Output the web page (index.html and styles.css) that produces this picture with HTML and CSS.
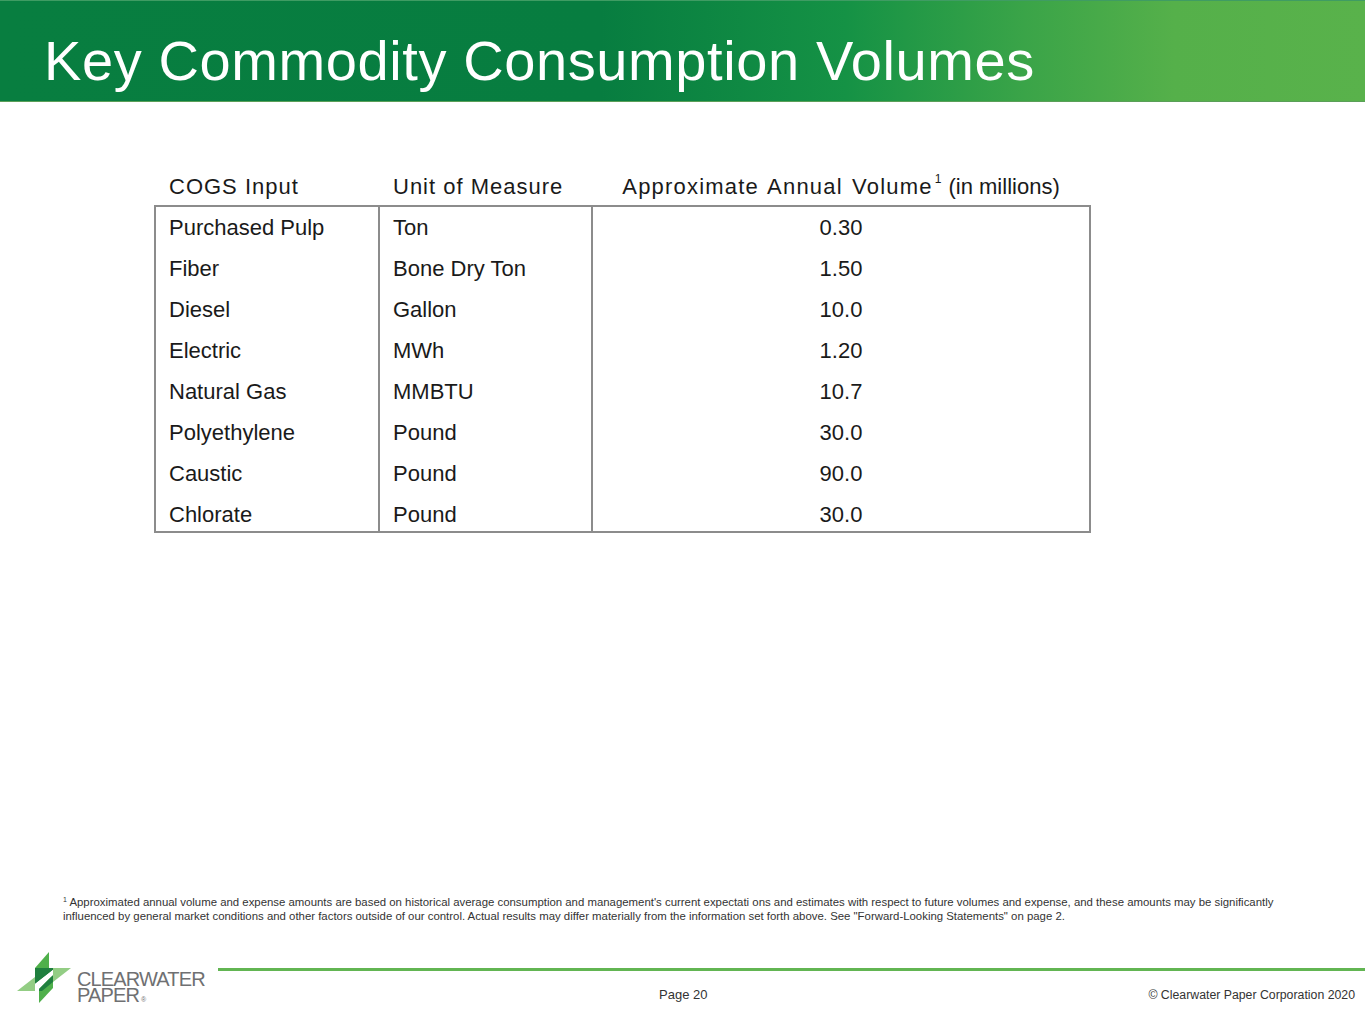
FILE: index.html
```html
<!DOCTYPE html>
<html lang="en">
<head>
<meta charset="utf-8">
<title>Key Commodity Consumption Volumes</title>
<link rel="stylesheet" href="styles.css">
</head>
<body>
<div class="page">
  <header class="banner">
    <h1 class="title">Key Commodity Consumption Volumes</h1>
  </header>

  <main class="content">
    <div class="table">
      <div class="thead">
        <div class="th">COGS Input</div>
        <div class="th">Unit of Measure</div>
        <div class="th th-center"><span class="th-wide">Approximate Annual Volume</span><sup class="sup">1</sup> <span class="th-plain">(in millions)</span></div>
      </div>
      <div class="tbody">
        <div class="col col-input">
          <div class="cell">Purchased Pulp</div>
          <div class="cell">Fiber</div>
          <div class="cell">Diesel</div>
          <div class="cell">Electric</div>
          <div class="cell">Natural Gas</div>
          <div class="cell">Polyethylene</div>
          <div class="cell">Caustic</div>
          <div class="cell">Chlorate</div>
        </div>
        <div class="col col-unit">
          <div class="cell">Ton</div>
          <div class="cell">Bone Dry Ton</div>
          <div class="cell">Gallon</div>
          <div class="cell">MWh</div>
          <div class="cell">MMBTU</div>
          <div class="cell">Pound</div>
          <div class="cell">Pound</div>
          <div class="cell">Pound</div>
        </div>
        <div class="col col-volume">
          <div class="cell">0.30</div>
          <div class="cell">1.50</div>
          <div class="cell">10.0</div>
          <div class="cell">1.20</div>
          <div class="cell">10.7</div>
          <div class="cell">30.0</div>
          <div class="cell">90.0</div>
          <div class="cell">30.0</div>
        </div>
      </div>
    </div>
  </main>

  <p class="footnote"><sup class="fn-sup">1</sup> Approximated annual volume and expense amounts are based on historical average consumption and management's current expectati ons and estimates with respect to future volumes and expense, and these amounts may be significantly<br>influenced by general market conditions and other factors outside of our control. Actual results may differ materially from the information set forth above. See "Forward-Looking Statements" on page 2.</p>

  <footer class="footer">
    <div class="logo">
      <svg class="logo-mark" width="64" height="58" viewBox="0 0 64 58" aria-hidden="true">
        <polygon points="5,43 23,29 23,43" fill="#93cd84"/>
        <polygon points="41,20 59,20 41,34" fill="#93cd84"/>
        <polygon points="23,20 37,4 37,20" fill="#4fb04b"/>
        <polygon points="23,20 41,20 41,22 23,36" fill="#1f7f3e"/>
        <polygon points="27,41 41,27 41,40 27,55" fill="#4fb04b"/>
        <polygon points="27,41 41,27 41,34 30,43 27,43" fill="#1f7f3e"/>
        <polygon points="23,36 41,22 41,27 23,41" fill="#ffffff"/>
      </svg>
      <div class="logo-text">
        <div class="logo-line">CLEARWATER</div>
        <div class="logo-line">PAPER<span class="reg">®</span></div>
      </div>
    </div>
    <div class="foot-right">
      <div class="rule"></div>
      <div class="meta">
        <span class="page-no">Page 20</span>
        <span class="copy">© Clearwater Paper Corporation 2020</span>
      </div>
    </div>
  </footer>
</div>
</body>
</html>
```
FILE: styles.css
```css
html, body {
  margin: 0;
  padding: 0;
  background: #ffffff;
}

body {
  font-family: "Liberation Sans", Arial, sans-serif;
  color: #1a1a1a;
}

.page {
  width: 1365px;
  height: 1024px;
  display: flex;
  flex-direction: column;
  overflow: hidden;
}

/* ---------- banner ---------- */
.banner {
  height: 102px;
  box-sizing: border-box;
  flex: none;
  background: linear-gradient(to right, #087e40 0%, #077d40 44%, #159245 62%, #3aa448 75%, #55b04a 86%, #59b24b 100%);
  border-top: 1px solid #3f9c63;
  border-bottom: 1px solid #5a9f58;
  padding-left: 44px;
  display: flex;
  align-items: flex-start;
}

.title {
  margin: 0;
  padding-top: 28px;
  font-weight: normal;
  font-size: 56px;
  line-height: 64px;
  letter-spacing: 0.6px;
  color: #ffffff;
}

/* ---------- table ---------- */
.content {
  padding-top: 62px;
  padding-left: 154px;
}

.table {
  width: 937px;
  font-size: 22px;
}

.thead {
  display: grid;
  grid-template-columns: 224px 213px 500px;
  height: 41px;
}

.th {
  padding: 10px 0 0 15px;
  line-height: 26px;
  letter-spacing: 1px;
  white-space: nowrap;
}

.th-center {
  padding-left: 0;
  text-align: center;
}

.th-wide {
  letter-spacing: 1.2px;
  word-spacing: 2px;
}

.th-plain {
  letter-spacing: 0;
}

.sup {
  font-size: 12px;
  line-height: 0;
  letter-spacing: 0;
  position: relative;
  top: -3px;
  margin-left: 2px;
}

.tbody {
  display: grid;
  grid-template-columns: 222px 213px 498px;
  grid-template-rows: minmax(0, 1fr);
  height: 328px;
  box-sizing: border-box;
  border: 2px solid #8c8c8c;
}

.col {
  display: flex;
  flex-direction: column;
  overflow: hidden;
}

.col-unit,
.col-volume {
  border-left: 2px solid #8c8c8c;
}

.cell {
  height: 41px;
  line-height: 41px;
  flex: none;
  white-space: nowrap;
}

.col-input .cell,
.col-unit .cell {
  padding-left: 13px;
}

.col-volume .cell {
  text-align: center;
}

/* ---------- footnote ---------- */
.footnote {
  margin: auto 0 25px 0;
  padding-left: 63px;
  font-size: 11.4px;
  line-height: 14px;
  color: #333333;
}

.fn-sup {
  font-size: 7px;
  line-height: 0;
  vertical-align: 4px;
}

/* ---------- footer ---------- */
.footer {
  height: 76px;
  flex: none;
  display: flex;
}

.logo {
  width: 218px;
  flex: none;
  display: flex;
  align-items: flex-start;
  padding-left: 12px;
  box-sizing: border-box;
}

.logo-mark {
  display: block;
  flex: none;
}

.logo-text {
  margin-top: 23px;
  margin-left: 1px;
  font-size: 20px;
  line-height: 16px;
  letter-spacing: -0.85px;
  color: #6f7072;
}

.logo-line {
  white-space: nowrap;
}

.reg {
  font-size: 7px;
  letter-spacing: 0;
  margin-left: 2px;
}

.foot-right {
  flex: 1;
  display: flex;
  flex-direction: column;
}

.rule {
  margin-top: 20px;
  height: 3px;
  background: #62b552;
}

.meta {
  margin-top: 16px;
  display: flex;
  align-items: baseline;
  padding-right: 10px;
  color: #333333;
  line-height: 16px;
}

.page-no {
  margin-left: 441px;
  font-size: 13px;
}

.copy {
  margin-left: auto;
  font-size: 12.3px;
}
```
